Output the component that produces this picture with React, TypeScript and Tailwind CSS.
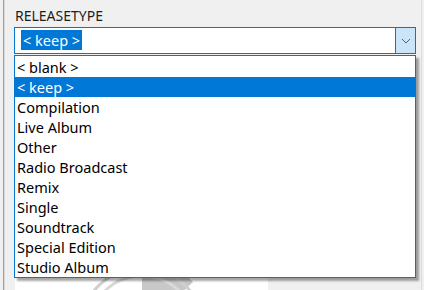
import React from "react";

const items = [
  "< blank >",
  "< keep >",
  "Compilation",
  "Live Album",
  "Other",
  "Radio Broadcast",
  "Remix",
  "Single",
  "Soundtrack",
  "Special Edition",
  "Studio Album",
];

export default function App() {
  const font = { fontFamily: '"Noto Sans", "Open Sans", sans-serif' };
  return (
    <div
      className="w-[424px] h-[290px] bg-[#f0f0f0] overflow-hidden flex text-[14.5px] text-black"
      style={font}
    >
      <div className="w-[3px] shrink-0" />
      <div className="w-[1px] shrink-0 bg-[#a0a0a0]" />
      <div className="w-[1px] shrink-0 bg-[#d8d8d8]" />
      <div className="relative flex-1 flex flex-col pl-[9px]">
        <div className="h-[28px] pt-[6px] pl-[1px] leading-[20px] text-[14px] text-[#1e1e1e]">RELEASETYPE</div>
        <div className="w-[402px] h-[28px] border border-[#0078d7] bg-white flex">
          <div className="flex-1 pl-[6px] pt-[2px]">
            <span className="inline-block h-[20px] leading-[20px] bg-[#0078d7] text-white px-[2px]">
              &lt; keep &gt;
            </span>
          </div>
          <div className="w-[20px] bg-[#cce4f7] border-l border-[#0078d7] flex items-center justify-center">
            <svg width="10" height="6" viewBox="0 0 10 6">
              <path d="M1 1 L5 5 L9 1" fill="none" stroke="#606060" strokeWidth="1" />
            </svg>
          </div>
        </div>
        <div className="ml-[1px] mt-[6px] w-[253px] h-[240px] bg-white relative overflow-hidden">
          <svg width="253" height="300" viewBox="0 0 253 300" className="absolute left-0 top-0">
            <path d="M127 270 L178 222 A70 70 0 0 0 127 200 Z" fill="#c8c8c8" />
            <circle cx="127" cy="270" r="62" fill="none" stroke="#cfcfcf" strokeWidth="3" />
            <circle cx="127" cy="270" r="54" fill="none" stroke="#d9d9d9" strokeWidth="3" />
          </svg>
        </div>
        <div className="absolute left-[9px] top-[55px] w-[402px] border border-[#0078d7] bg-white pt-[1px] shadow-[3px_3px_2px_rgba(0,0,0,0.35)]">
          {items.map((it) => (
            <div
              key={it}
              className={
                "h-[20px] leading-[20px] pl-[2px] " +
                (it === "< keep >" ? "bg-[#0078d7] text-white" : "text-black")
              }
            >
              {it}
            </div>
          ))}
        </div>
      </div>
      <div className="w-[1px] shrink-0 bg-[#dcdcdc]" />
      <div className="w-[2px] shrink-0" />
    </div>
  );
}
